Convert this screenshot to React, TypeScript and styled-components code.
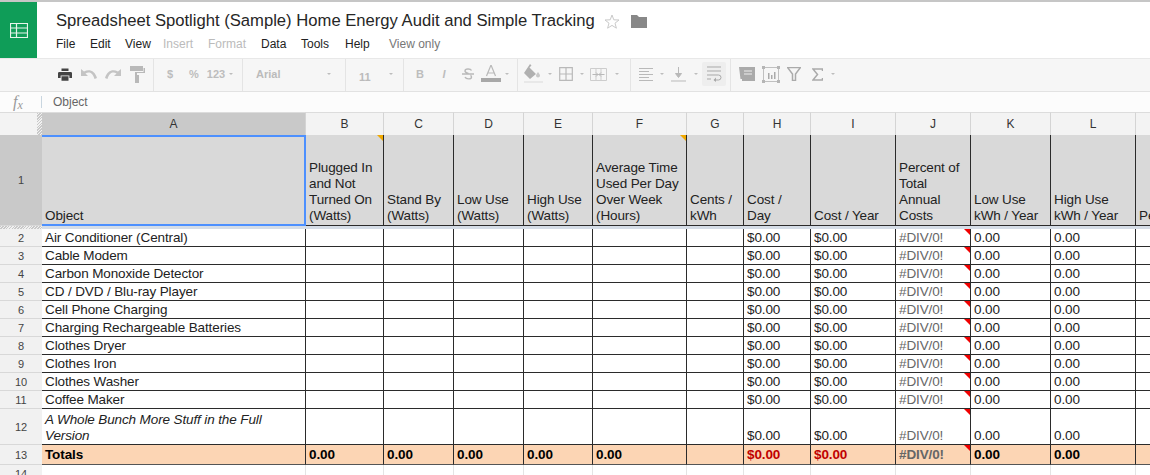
import React, { FC } from 'react';
import styled, { createGlobalStyle, css } from 'styled-components';

const COLS = '42px 264px 78px 70px 70px 69px 94px 57px 67px 85px 75px 80px 85px 85px';
const HATCH = 'repeating-linear-gradient(135deg, #c8c8c8 0 1px, #f1f1f1 1px 2px)';

const GlobalStyle = createGlobalStyle`
	html, body {
		margin: 0;
		padding: 0;
		background: #fff;
		font-family: "Liberation Sans", Arial, sans-serif;
	}
`;

const Page = styled.div`
	width: 1150px;
	height: 475px;
	overflow: hidden;
	display: flex;
	flex-direction: column;
	border-top: 2px solid #c6c6c6;
	box-sizing: border-box;
	color: #222;
`;

const Header = styled.header`
	display: flex;
	height: 56px;
	flex: none;
`;

const Logo = styled.div`
	width: 37px;
	height: 56px;
	background: #0f9d58;
	display: flex;
	align-items: center;
	justify-content: center;
	flex: none;
`;

const TitleBlock = styled.div`
	padding-left: 19px;
	display: flex;
	flex-direction: column;
`;

const TitleRow = styled.div`
	display: flex;
	align-items: center;
	height: 34px;
	padding-top: 4px;
	box-sizing: border-box;
`;

const Title = styled.h1`
	margin: 0;
	font-size: 16.64px;
	font-weight: 400;
	color: #262626;
	white-space: nowrap;
`;

const Star = styled.span`
	margin-left: 9px;
	display: flex;
`;

const Folder = styled.span`
	margin-left: 11px;
	display: flex;
`;

const MenuBar = styled.nav`
	display: flex;
	font-size: 12px;
	height: 16px;
	line-height: 16px;
`;

const MenuItem = styled.span<{ $w: number; $off?: boolean; $note?: boolean }>`
	width: ${(p) => p.$w}px;
	color: ${(p) => (p.$note ? '#777' : p.$off ? '#bbb' : '#222')};
	white-space: nowrap;
`;

const Toolbar = styled.div`
	display: flex;
	height: 34px;
	flex: none;
	box-sizing: border-box;
	background: #f6f6f6;
	border-top: 1px solid #e8e8e8;
	border-bottom: 1px solid #e2e2e2;
`;

const ToolGroup = styled.div<{ $w: number; $pad: number; $last?: boolean }>`
	width: ${(p) => p.$w}px;
	padding: 0 0 2px ${(p) => p.$pad}px;
	box-sizing: border-box;
	display: flex;
	align-items: center;
	border-right: ${(p) => (p.$last ? 'none' : '1px solid #e4e4e4')};
`;

const Tool = styled.span<{ $w?: number; $boxed?: boolean }>`
	width: ${(p) => p.$w ?? 24}px;
	height: 22px;
	flex: none;
	display: flex;
	align-items: center;
	justify-content: center;
	font-size: 11px;
	font-weight: 700;
	color: #bdbdbd;
	${(p) =>
		p.$boxed &&
		css`
			background: #eeeeee;
			border-radius: 2px;
			height: 24px;
		`}
`;

const Caret = styled.span<{ $w?: number }>`
	width: ${(p) => p.$w ?? 8}px;
	flex: none;
	display: flex;
	justify-content: center;
	&::before {
		content: '';
		border-left: 2px solid transparent;
		border-right: 2px solid transparent;
		border-top: 2px solid #bdbdbd;
	}
`;

const FontName = styled.span<{ $w: number; $low?: boolean }>`
	width: ${(p) => p.$w}px;
	flex: none;
	font-size: 11px;
	font-weight: 700;
	color: #bbb;
	padding-top: ${(p) => (p.$low ? 5 : 0)}px;
`;

const FormulaBar = styled.div`
	display: flex;
	align-items: center;
	height: 20px;
	flex: none;
	background: #fcfcfc;
	font-size: 12px;
	color: #666;
`;

const Fx = styled.span`
	width: 41px;
	padding-left: 13px;
	box-sizing: border-box;
	font-family: "Liberation Serif", serif;
	font-style: italic;
	font-size: 16px;
	line-height: 16px;
	color: #999;
	flex: none;
`;

const FxSub = styled.span`
	font-size: 12px;
	position: relative;
	top: 2px;
`;

const FormulaText = styled.span`
	border-left: 1px solid #c9d6e0;
	padding-left: 11px;
	line-height: 12px;
`;

const Row = styled.div<{ $h: number }>`
	display: grid;
	grid-template-columns: ${COLS};
	height: ${(p) => p.$h}px;
	flex: none;
`;

const ColHeader = styled.div<{ $active?: boolean }>`
	background: ${(p) => (p.$active ? '#c9c9c9' : '#f3f3f3')};
	border-right: 1px solid #d4d4d4;
	border-top: 1px solid #dcdcdc;
	box-sizing: border-box;
	display: flex;
	align-items: center;
	justify-content: center;
	font-size: 12px;
	color: #333;
`;

const Corner = styled.div`
	background: #f3f3f3;
	border-top: 1px solid #dcdcdc;
	box-sizing: border-box;
	position: relative;
	&::after {
		content: '';
		position: absolute;
		top: 0;
		bottom: 0;
		right: 0;
		width: 5px;
		background: ${HATCH};
	}
`;

const RowHeader = styled.div<{ $active?: boolean; $last?: boolean }>`
	background: ${(p) => (p.$active ? '#c9c9c9' : '#f1f1f1')};
	border-bottom: 1px solid ${(p) => (p.$last ? '#777' : '#d8d8d8')};
	box-sizing: border-box;
	display: flex;
	align-items: center;
	justify-content: center;
	font-size: 11px;
	color: #444;
`;

type Tone = 'plain' | 'error' | 'alert';

const Cell = styled.div<{ $head?: boolean; $total?: boolean; $tone?: Tone; $note?: string; $italic?: boolean; $empty?: boolean }>`
	position: relative;
	box-sizing: border-box;
	overflow: hidden;
	display: flex;
	align-items: flex-end;
	padding: 0 0 ${(p) => (p.$total || p.$head ? 1 : 0)}px 3px;
	font-size: 13.5px;
	letter-spacing: -0.12px;
	line-height: 16px;
	white-space: ${(p) => (p.$head ? 'pre-line' : 'normal')};
	border-right: 1px solid ${(p) => (p.$empty ? '#e4e4e4' : '#2b2b2b')};
	border-bottom: 1px solid ${(p) => (p.$empty ? '#e8e8e8' : p.$total ? '#555' : '#2b2b2b')};
	background: ${(p) => (p.$head ? '#d9d9d9' : p.$total ? '#fcd5b4' : '#fff')};
	font-weight: ${(p) => (p.$total ? 700 : 400)};
	font-style: ${(p) => (p.$italic ? 'italic' : 'normal')};
	color: ${(p) => (p.$tone === 'error' ? '#666' : p.$tone === 'alert' ? '#c00000' : p.$total ? '#000' : '#222')};
	${(p) =>
		p.$note &&
		css`
			&::after {
				content: '';
				position: absolute;
				top: 0;
				right: 0;
				border-top: 6px solid ${p.$note};
				border-left: 6px solid transparent;
			}
		`}
`;

const SelectedCell = styled(Cell)`
	border: 2px solid #4d90fe;
	border-left: none;
	padding: 0 0 0 3px;
`;

const FreezeBand = styled.div`
	display: grid;
	grid-template-columns: 42px 1fr;
	height: 3px;
	flex: none;
`;

const FreezeHatch = styled.div`
	background: ${HATCH};
`;

const FreezeFill = styled.div`
	background: #d5dde7;
`;

const GRAY = '#b9b9b9';

const PrintIcon = () => (
	<svg width='14' height='13' viewBox='0 0 16 14'>
		<path d='M4 0h8v3H4zM1.500 4h13A1.500 1.500 0 0 1 16 5.500V11h-3V8H3v3H0V5.500A1.500 1.500 0 0 1 1.500 4zM4 9h8v5H4z' fill='#444' />
	</svg>
);

const UndoIcon: FC<{ flip?: boolean }> = ({ flip }) => (
	<svg width='16' height='10' viewBox='0 0 16 10' style={flip ? { transform: 'scaleX(-1)' } : undefined}>
		<path d='M0 0v7h7L4.500 4.500C7.500 2.500 11.500 3 13.500 10L16 9C14 1.500 8 -.5 3 2.500z' fill='#c4c4c4' />
	</svg>
);

const PaintIcon = () => (
	<svg width='15' height='17' viewBox='0 0 15 17'>
		<path d='M0 0h13v5H0zM13.500 2H15v5H7v2h2v8H5V9h0V6h8.500z' fill={GRAY} />
	</svg>
);

const StrikeIcon = () => (
	<svg width='12' height='12' viewBox='0 0 12 12'>
		<path d='M9.500 2.500C8.500.5 3 .5 3 3c0 1.500 2 2 3.500 2.500M3 9c1 2.500 6.500 2.500 6.500 0 0-.8-.5-1.300-1-1.600M0 6h12' stroke={GRAY} strokeWidth='1.400' fill='none' />
	</svg>
);

const ColorAIcon = () => (
	<svg width='20' height='18' viewBox='0 0 20 18'>
		<path d='M10 0L5.500 11M10 0l4.500 11M7 8h6' stroke={GRAY} strokeWidth='1.200' fill='none' />
		<rect y='13' width='20' height='4' fill='#a8a8a8' />
	</svg>
);

const FillIcon = () => (
	<svg width='20' height='20' viewBox='0 0 20 20'>
		<path d='M6 0l1.500 1.500L5.500 3.500l6.500 6.500-6 5-6-6z' fill='#b0b0b0' />
		<path d='M14 8c1 1.500 2 2.500 2 3.500a2 2 0 0 1-4 0c0-1 1-2 2-3.500z' fill='#c8c8c8' />
		<rect y='17' width='19' height='2' fill='#e8e8e8' />
	</svg>
);

const BordersIcon = () => (
	<svg width='14' height='14' viewBox='0 0 14 14'>
		<path d='M.7.700h12.600v12.600H.7zM7 .7v12.600M.7 7h12.600' stroke={GRAY} strokeWidth='1.200' fill='none' />
	</svg>
);

const MergeIcon = () => (
	<svg width='17' height='13' viewBox='0 0 17 13'>
		<path d='M.5.500h16v12H.5zM6 .5v12M11 .5v12' stroke='#cdcdcd' strokeWidth='1' fill='none' />
		<path d='M2.500 6.500h6M14.500 6.500h-6M6 4.500l2 2-2 2M11 4.500l-2 2 2 2' stroke={GRAY} strokeWidth='1' fill='none' />
	</svg>
);

const AlignIcon = () => (
	<svg width='14' height='13' viewBox='0 0 14 13'>
		<path d='M0 .5h14M0 3.500h10M0 6.500h14M0 9.500h10M0 12.500h14' stroke={GRAY} strokeWidth='1' />
	</svg>
);

const ValignIcon = () => (
	<svg width='15' height='15' viewBox='0 0 15 15'>
		<path d='M7.500 0v9M4.500 6.500l3 4 3-4z' stroke={GRAY} fill={GRAY} strokeWidth='1' />
		<path d='M0 14h15' stroke={GRAY} strokeWidth='1' />
	</svg>
);

const WrapIcon = () => (
	<svg width='15' height='16' viewBox='0 0 15 16'>
		<path d='M0 1h14M0 5h14M0 9h11.500a2 2 0 0 1 0 5H7M0 13h4' stroke='#a9a9a9' strokeWidth='1' fill='none' />
		<path d='M9 11.500L6.500 14 9 16z' fill='#a9a9a9' />
	</svg>
);

const CommentIcon = () => (
	<svg width='16' height='14' viewBox='0 0 16 14'>
		<path d='M0 0h16v14H3v-2H1.500z' fill='#aaa' />
		<path d='M5 4h8M5 7h8' stroke='#eee' strokeWidth='1' />
	</svg>
);

const ChartIcon = () => (
	<svg width='18' height='17' viewBox='0 0 18 17'>
		<rect x='1.500' y='1.500' width='15' height='14' fill='none' stroke='#c0c0c0' />
		<path d='M0 0h3v3H0zM15 0h3v3h-3zM0 14h3v3H0zM15 14h3v3h-3z' fill='#b5b5b5' />
		<path d='M6 7h1.500v6H6zM9 9h1.500v4H9zM12 6h1.500v7H12z' fill='#aaa' />
	</svg>
);

const FilterIcon = () => (
	<svg width='14' height='14' viewBox='0 0 14 14'>
		<path d='M.5.500h13L8.500 7v6.500h-3V7z' fill='none' stroke='#aaa' strokeWidth='1.500' />
	</svg>
);

const SumIcon = () => (
	<svg width='11' height='13' viewBox='0 0 11 13'>
		<path d='M10.500 3V1H1l4.500 5.500L1 12h9.500v-2' fill='none' stroke='#aaa' strokeWidth='1.500' />
	</svg>
);

const HEADERS: string[] = [
	'Object',
	'Plugged In and Not Turned On (Watts)',
	'Stand By (Watts)',
	'Low Use (Watts)',
	'High Use (Watts)',
	'Average Time Used Per Day Over Week (Hours)',
	'Cents / kWh',
	'Cost /\nDay',
	'Cost / Year',
	'Percent of Total Annual Costs',
	'Low Use kWh / Year',
	'High Use kWh / Year',
	'Per Year'
];

const LETTERS = 'ABCDEFGHIJKLM'.split('');

const ITEMS = [
	'Air Conditioner (Central)',
	'Cable Modem',
	'Carbon Monoxide Detector',
	'CD / DVD / Blu-ray Player',
	'Cell Phone Charging',
	'Charging Rechargeable Batteries',
	'Clothes Dryer',
	'Clothes Iron',
	'Clothes Washer',
	'Coffee Maker',
	'A Whole Bunch More Stuff in the Full Version'
];

const BLANKS = [0, 1, 2, 3, 4, 5];

const DataRow: FC<{ num: number; name: string; height: number; italic?: boolean }> = ({ num, name, height, italic }) => (
	<Row $h={height}>
		<RowHeader>{num}</RowHeader>
		<Cell $italic={italic}>{name}</Cell>
		{BLANKS.map((b) => <Cell key={b} />)}
		<Cell>$0.00</Cell>
		<Cell>$0.00</Cell>
		<Cell $tone='error' $note='#f00000'>#DIV/0!</Cell>
		<Cell>0.00</Cell>
		<Cell>0.00</Cell>
		<Cell />
	</Row>
);

const App: FC = () => (
	<Page>
		<GlobalStyle />
		<Header>
			<Logo>
				<svg width='18' height='15' viewBox='0 0 18 15'>
					<path d='M.5.500h17v14H.5zM.5 5h17M.5 10h17M6.500.5v14' fill='none' stroke='#e6f4ea' strokeWidth='1.200' />
				</svg>
			</Logo>
			<TitleBlock>
				<TitleRow>
					<Title>Spreadsheet Spotlight (Sample) Home Energy Audit and Simple Tracking</Title>
					<Star>
						<svg width='16' height='15' viewBox='0 0 16 15'>
							<path d='M8 1l1.800 4.800 5.200.2-4 3.200 1.400 5L8 11.400 3.600 14.200 5 9.200 1 6l5.200-.2z' fill='none' stroke='#c9c9c9' />
						</svg>
					</Star>
					<Folder>
						<svg width='16' height='13' viewBox='0 0 16 13'>
							<path d='M0 0h6l2 2h8v11H0z' fill='#888' />
						</svg>
					</Folder>
				</TitleRow>
				<MenuBar>
					<MenuItem $w={34}>File</MenuItem>
					<MenuItem $w={35}>Edit</MenuItem>
					<MenuItem $w={38}>View</MenuItem>
					<MenuItem $w={45} $off>Insert</MenuItem>
					<MenuItem $w={53} $off>Format</MenuItem>
					<MenuItem $w={40}>Data</MenuItem>
					<MenuItem $w={44}>Tools</MenuItem>
					<MenuItem $w={44}>Help</MenuItem>
					<MenuItem $w={60} $note>View only</MenuItem>
				</MenuBar>
			</TitleBlock>
		</Header>
		<Toolbar>
			<ToolGroup $w={154} $pad={53}>
				<Tool><PrintIcon /></Tool>
				<Tool><UndoIcon /></Tool>
				<Tool><UndoIcon flip /></Tool>
				<Tool><PaintIcon /></Tool>
			</ToolGroup>
			<ToolGroup $w={89} $pad={4}>
				<Tool>$</Tool>
				<Tool>%</Tool>
				<Tool $w={20}>123</Tool>
				<Caret $w={10} />
			</ToolGroup>
			<ToolGroup $w={103} $pad={13}>
				<FontName $w={69}>Arial</FontName>
				<Caret $w={8} />
			</ToolGroup>
			<ToolGroup $w={58} $pad={13}>
				<FontName $w={28} $low>11</FontName>
				<Caret $w={8} />
			</ToolGroup>
			<ToolGroup $w={114} $pad={4}>
				<Tool>B</Tool>
				<Tool><i>I</i></Tool>
				<Tool><StrikeIcon /></Tool>
				<Tool $w={22}><ColorAIcon /></Tool>
				<Caret $w={10} />
			</ToolGroup>
			<ToolGroup $w={113} $pad={4}>
				<Tool><FillIcon /></Tool>
				<Caret />
				<Tool><BordersIcon /></Tool>
				<Caret />
				<Tool><MergeIcon /></Tool>
				<Caret $w={14} />
			</ToolGroup>
			<ToolGroup $w={100} $pad={3}>
				<Tool><AlignIcon /></Tool>
				<Caret />
				<Tool><ValignIcon /></Tool>
				<Caret $w={12} />
				<Tool $boxed><WrapIcon /></Tool>
			</ToolGroup>
			<ToolGroup $w={120} $pad={4} $last>
				<Tool><CommentIcon /></Tool>
				<Tool $w={23}><ChartIcon /></Tool>
				<Tool><FilterIcon /></Tool>
				<Tool $w={22}><SumIcon /></Tool>
				<Caret $w={10} />
			</ToolGroup>
		</Toolbar>
		<FormulaBar>
			<Fx>f<FxSub>x</FxSub></Fx>
			<FormulaText>Object</FormulaText>
		</FormulaBar>
		<Row $h={23}>
			<Corner />
			{LETTERS.map((l) => <ColHeader key={l} $active={l === 'A'}>{l}</ColHeader>)}
		</Row>
		<Row $h={91}>
			<RowHeader $active>1</RowHeader>
			<SelectedCell $head>{HEADERS[0]}</SelectedCell>
			{HEADERS.slice(1).map((h, i) => (
				<Cell key={h} $head $note={i === 0 || i === 4 ? '#f0a800' : undefined}><span>{h}</span></Cell>
			))}
		</Row>
		<FreezeBand>
			<FreezeHatch />
			<FreezeFill />
		</FreezeBand>
		{ITEMS.map((name, i) => (
			<DataRow key={name} num={i + 2} name={name} height={i === 10 ? 36 : 18} italic={i === 10} />
		))}
		<Row $h={20}>
			<RowHeader>13</RowHeader>
			<Cell $total>Totals</Cell>
			{BLANKS.slice(0, 5).map((b) => <Cell key={b} $total>0.00</Cell>)}
			<Cell $total />
			<Cell $total $tone='alert'>$0.00</Cell>
			<Cell $total $tone='alert'>$0.00</Cell>
			<Cell $total $tone='error' $note='#f00000'>#DIV/0!</Cell>
			<Cell $total>0.00</Cell>
			<Cell $total>0.00</Cell>
			<Cell $total />
		</Row>
		<Row $h={18}>
			<RowHeader>14</RowHeader>
			{LETTERS.map((l) => <Cell key={l} $empty />)}
		</Row>
	</Page>
);

export default App;
